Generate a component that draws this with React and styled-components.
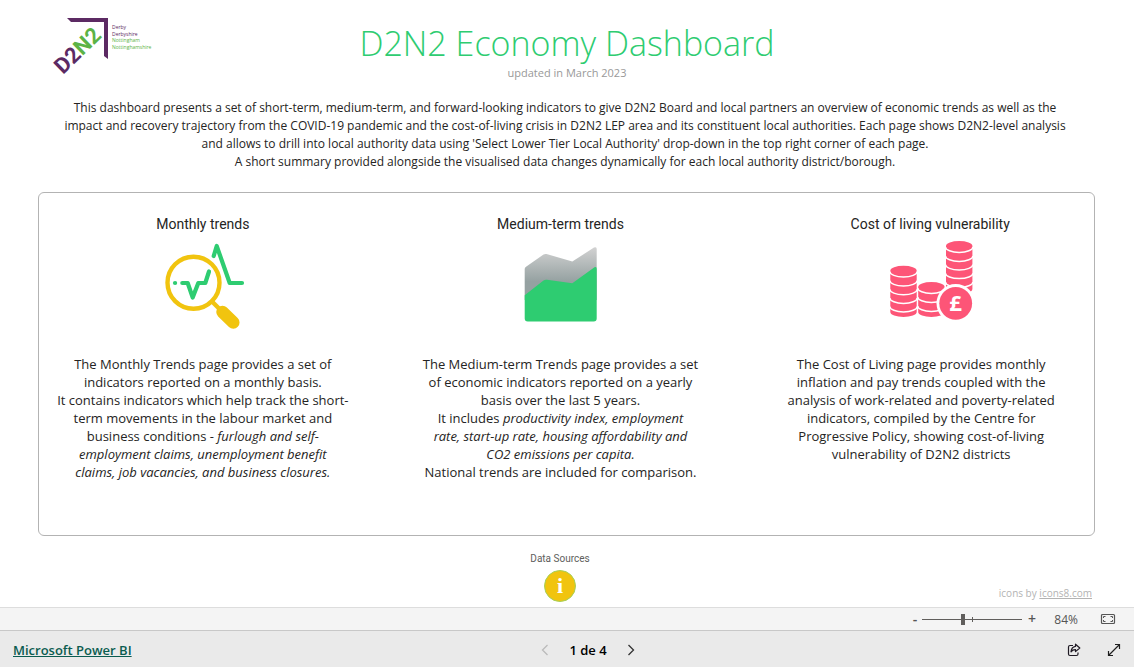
import React, { useState } from 'react';
import styled, { createGlobalStyle } from 'styled-components';

const GlobalStyle = createGlobalStyle`
  * {
    box-sizing: border-box;
  }

  body {
    margin: 0;
    background-color: #ffffff;
    color: #252423;
    font-family: 'Open Sans', 'Noto Sans', sans-serif;
  }
`;

const PINK = '#fd5577';

const D2N2Logo = () => (
  <svg width="126" height="68" viewBox="-10 0 126 68" role="img" aria-label="D2N2">
    <path d="M17 1H58V42L54 39V5H21Z" fill="#5c2a63" />
    <g transform="translate(13 58) rotate(-44)">
      <text
        fontFamily="Roboto, 'Open Sans', sans-serif"
        fontSize="22"
        fontWeight="700"
      >
        <tspan fill="#5c2a63">D2</tspan>
        <tspan fill="#5cb346">N2</tspan>
      </text>
    </g>
    <g fontFamily="'Open Sans', sans-serif" fontSize="5">
      <text x="62" y="12" fill="#5c2a63">Derby</text>
      <text x="62" y="19" fill="#5c2a63">Derbyshire</text>
      <text x="62" y="25" fill="#5cb346">Nottingham</text>
      <text x="62" y="32" fill="#5cb346">Nottinghamshire</text>
    </g>
  </svg>
);

const MonthlyIcon = () => (
  <svg width="90" height="90" viewBox="-2 0 90 90" aria-hidden="true">
    <g fill="none" stroke="#f1c40f" strokeLinecap="round">
      <circle cx="33.5" cy="42.7" r="26" strokeWidth="4.4" />
      <path d="M52 61.5L60 69.5" strokeWidth="4.4" />
      <path d="M62.5 72L73.3 82.5" strokeWidth="12.5" />
    </g>
    <g fill="none" stroke="#2ecc71" strokeWidth="4.2" strokeLinecap="round" strokeLinejoin="round">
      <path d="M15 43H15.1" />
      <path d="M22.3 43H27.7L32.7 57.5L38.3 43H45.3L49 31.5" />
      <path d="M53.7 16L56.7 6L69.7 43H82" />
    </g>
  </svg>
);

const MediumIcon = () => (
  <svg width="90" height="90" viewBox="1 0 90 90" aria-hidden="true">
    <defs>
      <linearGradient id="areaFade" x1="0" y1="0" x2="0" y2="1">
        <stop offset="0" stopColor="#d2d2d2" />
        <stop offset="0.65" stopColor="#95a1a1" />
      </linearGradient>
    </defs>
    <path
      d="M9.7 29Q9.7 27.5 11 26.7L28.5 14.5Q30 13.6 31.5 14L57.3 21.5L79 7.6Q81.7 6.5 81.7 9V60H9.7Z"
      fill="url(#areaFade)"
    />
    <path
      d="M9.7 55.3L28.5 40.5Q30 39.4 32 39.7L57.3 43.3L79.5 27.3Q81.7 26 81.7 29V78.5Q81.7 81.5 78.7 81.5H12.7Q9.7 81.5 9.7 78.5Z"
      fill="#2ecc71"
    />
  </svg>
);

const CoinStack = ({ x, top, bottom, seams }) => (
  <g>
    <path
      d={`M${x} ${top}A13.2 5 0 0 1 ${x + 26.4} ${top}V${bottom}A13.2 5 0 0 1 ${x} ${bottom}Z`}
      fill={PINK}
    />
    {seams.map((y) => (
      <path
        key={y}
        d={`M${x - 0.5} ${y}A13.7 5.4 0 0 0 ${x + 26.9} ${y}`}
        fill="none"
        stroke="#ffffff"
        strokeWidth="1.5"
      />
    ))}
  </g>
);

const CostIcon = () => (
  <svg width="90" height="90" viewBox="-1 0 90 90" aria-hidden="true">
    <CoinStack x={4.3} top={30.7} bottom={72} seams={[31.6, 40.6, 49.3, 58, 66.5]} />
    <CoinStack x={32.2} top={47} bottom={72} seams={[48, 57, 66]} />
    <CoinStack x={60} top={6} bottom={49} seams={[7, 16, 24.6, 33.2, 42]} />
    <circle cx="69.7" cy="63.3" r="19.2" fill="#ffffff" />
    <circle cx="69.7" cy="63.3" r="16.4" fill={PINK} />
    <text
      x="69.5"
      y="71"
      textAnchor="middle"
      fontFamily="'Open Sans', sans-serif"
      fontSize="22"
      fontWeight="700"
      fill="#ffffff"
    >
      £
    </text>
  </svg>
);

const FitIcon = () => (
  <svg width="16" height="12" viewBox="0 0 16 12" fill="none" stroke="#555555" aria-hidden="true">
    <rect x="1.5" y="1.5" width="13" height="9" rx="1" strokeWidth="1.2" />
    <path d="M3.5 5V3.5H5.5M10.5 3.5H12.5V5M12.5 7V8.5H10.5M5.5 8.5H3.5V7" />
  </svg>
);

const ShareIcon = () => (
  <svg width="14" height="14" viewBox="0 0 14 14" fill="none" stroke="#1f1a24" strokeWidth="1.2" aria-hidden="true">
    <path d="M6 2.5H3Q1.5 2.5 1.5 4V11Q1.5 12.5 3 12.5H9.5Q11 12.5 11 11V9.5" />
    <path d="M8.5 1.2L12.8 5L8.5 8.6V6.6Q5.6 6.5 4 8.8Q4.4 3.9 8.5 3.3Z" strokeLinejoin="round" />
  </svg>
);

const ExpandIcon = () => (
  <svg width="14" height="14" viewBox="0 0 14 14" fill="none" stroke="#1f1f1f" strokeWidth="1.2" aria-hidden="true">
    <path d="M1.5 12.5L12.5 1.5M8 1.5H12.5V6M1.5 8V12.5H6" />
  </svg>
);

const Chevron = ({ flip }) => (
  <svg width="8" height="12" viewBox="0 0 8 12" fill="none" stroke="currentColor" strokeWidth="1.3" aria-hidden="true">
    <path d={flip ? 'M6.5 1L1.5 6L6.5 11' : 'M1.5 1L6.5 6L1.5 11'} />
  </svg>
);

const App = () => {
  const [zoom, setZoom] = useState(84);

  return (
    <Page>
      <GlobalStyle />
      <Report>
        {/* Logo and title */}
        <Header>
          <D2N2Logo />
          <TitleBlock>
            <Title>D2N2 Economy Dashboard</Title>
            <Updated>updated in March 2023</Updated>
          </TitleBlock>
        </Header>

        <Intro>
          This dashboard presents a set of short-term, medium-term, and forward-looking indicators to give D2N2 Board and local partners an overview of economic trends as well as the
          <br />
          impact and recovery trajectory from the COVID-19 pandemic and the cost-of-living crisis in D2N2 LEP area and its constituent local authorities. Each page shows D2N2-level analysis
          <br />
          and allows to drill into local authority data using 'Select Lower Tier Local Authority' drop-down in the top right corner of each page.
          <br />
          A short summary provided alongside the visualised data changes dynamically for each local authority district/borough.
        </Intro>

        {/* The three report sections */}
        <Sections>
          <Section>
            <SectionTitle>Monthly trends</SectionTitle>
            <MonthlyIcon />
            <SectionText>
              The Monthly Trends page provides a set of <br />
              indicators reported on a monthly basis.<br />
              It contains indicators which help track the short-<br />
              term movements in the labour market and<br />
              business conditions - <em>furlough and self-<br />
              employment claims, unemployment benefit<br />
              claims, job vacancies, and business closures.</em>
            </SectionText>
          </Section>
          <Section $middle>
            <SectionTitle>Medium-term trends</SectionTitle>
            <MediumIcon />
            <SectionText>
              The Medium-term Trends page provides a set<br />
              of economic indicators reported on a yearly<br />
              basis over the last 5 years.<br />
              It includes <em>productivity index, employment<br />
              rate, start-up rate, housing affordability and<br />
              CO2 emissions per capita.</em><br />
              National trends are included for comparison.
            </SectionText>
          </Section>
          <Section>
            <SectionTitle>Cost of living vulnerability</SectionTitle>
            <CostIcon />
            <SectionText $inset>
              The Cost of Living page provides monthly<br />
              inflation and pay trends coupled with the<br />
              analysis of work-related and poverty-related<br />
              indicators, compiled by the Centre for<br />
              Progressive Policy, showing cost-of-living<br />
              vulnerability of D2N2 districts
            </SectionText>
          </Section>
        </Sections>

        <Sources>
          <SourcesBlock>
            <SourcesLabel id="sources">Data Sources</SourcesLabel>
            <InfoButton aria-labelledby="sources">i</InfoButton>
          </SourcesBlock>
          <Credit>
            icons by <a href="#icons8">icons8.com</a>
          </Credit>
        </Sources>
      </Report>

      {/* Zoom controls */}
      <ZoomBar>
        <ZoomStep aria-label="Zoom out" onClick={() => setZoom(Math.max(10, zoom - 10))}>-</ZoomStep>
        <ZoomSlider
          type="range"
          min="10"
          max="190"
          value={zoom}
          aria-label="Zoom"
          onChange={(e) => setZoom(Number(e.target.value))}
        />
        <ZoomStep aria-label="Zoom in" onClick={() => setZoom(Math.min(190, zoom + 10))}>+</ZoomStep>
        <ZoomValue>{zoom}%</ZoomValue>
        <IconButton aria-label="Fit to page"><FitIcon /></IconButton>
      </ZoomBar>

      {/* Page navigation */}
      <Footer>
        <BrandLink href="#powerbi">Microsoft Power BI</BrandLink>
        <Pager>
          <IconButton aria-label="Previous page" disabled><Chevron flip /></IconButton>
          <PageNumber>1 de 4</PageNumber>
          <IconButton aria-label="Next page"><Chevron /></IconButton>
        </Pager>
        <Actions>
          <IconButton aria-label="Share"><ShareIcon /></IconButton>
          <IconButton aria-label="Full screen"><ExpandIcon /></IconButton>
        </Actions>
      </Footer>
    </Page>
  );
};

const Page = styled.div`
  display: flex;
  flex-direction: column;
  min-height: 100vh;
`;

const Report = styled.main`
  flex: 1;
  display: flex;
  flex-direction: column;
  padding-top: 17px;
`;

const Header = styled.header`
  display: grid;
  grid-template-columns: 1fr auto 1fr;
  padding: 0 40px;
`;

const TitleBlock = styled.div`
  padding-top: 4px;
  text-align: center;
`;

const Title = styled.h1`
  margin: 0;
  color: #2ecc71;
  font-size: 34px;
  font-weight: 300;
  line-height: 45px;
  white-space: nowrap;
`;

const Updated = styled.div`
  color: #999999;
  font-size: 11px;
  line-height: 14px;
`;

const Intro = styled.p`
  margin: 14px 0 0;
  padding-right: 4px;
  font-size: 12px;
  line-height: 18px;
  text-align: center;
  white-space: nowrap;
`;

const Sections = styled.div`
  display: flex;
  gap: 30px;
  min-height: 344px;
  margin: 21px 39px 0 38px;
  padding-top: 21px;
  border: 1px solid #b3b3b3;
  border-radius: 6px;
`;

const Section = styled.section`
  flex: 1 1 0;
  display: flex;
  flex-direction: column;
  align-items: center;
  min-width: 0;
  margin-right: ${(props) => (props.$middle ? '12px' : '0')};
`;

const SectionTitle = styled.h2`
  margin: 0 0 6px;
  font-family: Roboto, 'Open Sans', sans-serif;
  font-size: 14px;
  font-weight: 400;
  line-height: 20px;
`;

const SectionText = styled.p`
  margin: 25px 0 0;
  padding-right: ${(props) => (props.$inset ? '18px' : '0')};
  font-size: 13px;
  line-height: 18px;
  text-align: center;
  white-space: nowrap;
`;

const Sources = styled.div`
  display: grid;
  grid-template-columns: 1fr auto 1fr;
  align-items: end;
  padding: 15px 42px 5px 28px;
`;

const SourcesBlock = styled.div`
  grid-column: 2;
  display: flex;
  flex-direction: column;
  align-items: center;
  gap: 4px;
`;

const SourcesLabel = styled.span`
  color: #605e5c;
  font-family: Roboto, 'Open Sans', sans-serif;
  font-size: 10px;
  line-height: 15px;
`;

const InfoButton = styled.button`
  width: 32px;
  height: 32px;
  padding: 0;
  border: 1px solid #a5d05a;
  border-radius: 50%;
  background-color: #f1c40f;
  color: #ffffff;
  font-family: 'Liberation Serif', serif;
  font-size: 22px;
  font-weight: 700;
  line-height: 28px;
  cursor: pointer;
`;

const Credit = styled.div`
  justify-self: end;
  color: #b3b3b3;
  font-size: 10px;
  line-height: 18px;

  a {
    color: inherit;
  }
`;

const ZoomBar = styled.div`
  display: flex;
  align-items: center;
  justify-content: flex-end;
  height: 23px;
  padding-right: 18px;
  border-top: 1px solid #dddddd;
  background-color: #f4f4f4;
  color: #555555;
`;

const ZoomStep = styled.button`
  width: 12px;
  padding: 0;
  border: none;
  background: none;
  color: inherit;
  font-family: inherit;
  font-size: 14px;
  font-weight: 600;
  line-height: 20px;
  cursor: pointer;
`;

const ZoomSlider = styled.input`
  appearance: none;
  width: 100px;
  height: 12px;
  margin: 0 4px 0 1px;
  background:
    linear-gradient(#605e5c, #605e5c) center / 1px 5px no-repeat,
    linear-gradient(#605e5c, #605e5c) center / 100% 1px no-repeat;

  &::-webkit-slider-thumb {
    appearance: none;
    width: 4px;
    height: 11px;
    background-color: #605e5c;
  }
`;

const ZoomValue = styled.span`
  width: 40px;
  margin-right: 22px;
  font-size: 12px;
  text-align: right;
`;

const IconButton = styled.button`
  display: flex;
  padding: 0;
  border: none;
  background: none;
  color: #333333;
  cursor: pointer;

  &:disabled {
    color: #bbbbbb;
    cursor: default;
  }
`;

const Footer = styled.footer`
  display: grid;
  grid-template-columns: 1fr auto 1fr;
  align-items: center;
  height: 37px;
  padding: 2px 13px 0;
  border-top: 1px solid #c8c8c8;
  background-color: #eaeaea;
`;

const BrandLink = styled.a`
  justify-self: start;
  color: #0b5c50;
  font-size: 13px;
  font-weight: 600;
`;

const Pager = styled.div`
  display: flex;
  align-items: center;
  gap: 20px;
  padding-left: 42px;
`;

const PageNumber = styled.span`
  color: #000000;
  font-size: 13px;
  font-weight: 600;
`;

const Actions = styled.div`
  justify-self: end;
  display: flex;
  gap: 26px;
`;

export default App;
